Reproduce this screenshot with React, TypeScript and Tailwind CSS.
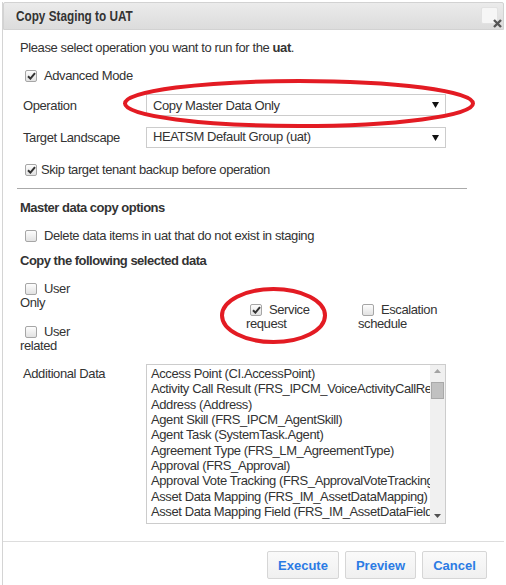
import React from "react";

function Check({ checked }: { checked?: boolean }) {
  return (
    <span className="inline-flex h-[12px] w-[12px] shrink-0 items-center justify-center rounded-[2px] border border-[#a6a6a6] bg-gradient-to-b from-[#fdfdfd] to-[#e2e2e2]">
      {checked && (
        <svg width="9" height="8" viewBox="0 0 9 8">
          <path d="M1 4.2 L3.4 6.6 L8 1.2" fill="none" stroke="#333" strokeWidth="2" />
        </svg>
      )}
    </span>
  );
}

function Arrow() {
  return (
    <svg width="7" height="6" viewBox="0 0 7 6">
      <path d="M0 0 H7 L3.5 6 Z" fill="#111" />
    </svg>
  );
}

function Wrapped({ first, second, checked, pad }: { first: string; second: string; checked?: boolean; pad: string }) {
  return (
    <div className="leading-[14px]">
      <div className={"flex h-[14px] items-center " + pad}>
        <Check checked={checked} />
        <span className="ml-[7px]">{first}</span>
      </div>
      <div className="h-[14px]">{second}</div>
    </div>
  );
}

const items = [
  "Access Point (CI.AccessPoint)",
  "Activity Call Result (FRS_IPCM_VoiceActivityCallResult)",
  "Address (Address)",
  "Agent Skill (FRS_IPCM_AgentSkill)",
  "Agent Task (SystemTask.Agent)",
  "Agreement Type (FRS_LM_AgreementType)",
  "Approval (FRS_Approval)",
  "Approval Vote Tracking (FRS_ApprovalVoteTracking)",
  "Asset Data Mapping (FRS_IM_AssetDataMapping)",
  "Asset Data Mapping Field (FRS_IM_AssetDataField)",
];

export default function App() {
  return (
    <div className="relative h-[585px] w-[506px] overflow-hidden bg-white font-['Liberation_Sans',Arial,sans-serif] text-[13px] leading-[15px] tracking-[-0.4px] text-[#333]">
      <div className="ml-[2px] h-full border-l border-[#d4d4d4]">
        {/* Title bar */}
        <div className="mr-[2px] mt-[2px] flex h-[28px] items-center rounded-t-[2px] border border-[#d2d2d2] bg-gradient-to-b from-[#ebebeb] to-[#dcdcdc] pl-[12px]">
          <span className="origin-left scale-x-[0.84] whitespace-nowrap text-[14px] font-bold tracking-normal text-[#333]">Copy Staging to UAT</span>
          <div className="ml-auto mr-[5px] mt-[4px] h-[17px] w-[17px] self-start rounded-[2px] border border-[#e2e2e2] bg-[#f6f6f6]" />
        </div>

        {/* Body */}
        <div className="pl-[17px]">
          <div className="mt-[10px]">
            Please select operation you want to run for the <b>uat</b>.
          </div>

          <div className="mt-[13px] flex items-center pl-[5px]">
            <Check checked />
            <span className="ml-[7px]">Advanced Mode</span>
          </div>

          <div className="mt-[11px] flex items-center">
            <span className="w-[126px] pl-[3px]">Operation</span>
            <div className="flex h-[22px] w-[300px] items-center border border-[#cccccc] bg-white pl-[6px] pr-[6px]">
              <span>Copy Master Data Only</span>
              <span className="ml-auto flex"><Arrow /></span>
            </div>
          </div>

          <div className="mt-[11px] flex items-center">
            <span className="w-[126px] pl-[3px]">Target Landscape</span>
            <div className="flex h-[21px] w-[300px] items-center border border-[#cccccc] bg-white pl-[6px] pr-[6px]">
              <span className="-mt-[2px]">HEATSM Default Group (uat)</span>
              <span className="ml-auto flex"><Arrow /></span>
            </div>
          </div>

          <div className="mt-[14px] flex items-center pl-[5px]">
            <Check checked />
            <span className="ml-[4px]">Skip target tenant backup before operation</span>
          </div>

          <div className="ml-[-3px] mt-[11px] h-[1px] w-[450px] bg-[#aaaaaa]" />

          <div className="mt-[11px] font-bold tracking-[-0.5px]">Master data copy options</div>

          <div className="mt-[13px] flex items-center pl-[5px]">
            <Check />
            <span className="ml-[7px]">Delete data items in uat that do not exist in staging</span>
          </div>

          <div className="mt-[10px] font-bold tracking-[-0.5px]">Copy the following selected data</div>

          <div className="mt-[14px] flex">
            <div className="w-[226px]">
              <Wrapped first="User" second="Only" pad="pl-[5px]" />
              <div className="mt-[15px]">
                <Wrapped first="User" second="related" pad="pl-[5px]" />
              </div>
            </div>
            <div className="mt-[21px] w-[112px]">
              <Wrapped first="Service" second="request" checked pad="pl-[4px]" />
            </div>
            <div className="mt-[21px]">
              <Wrapped first="Escalation" second="schedule" pad="pl-[4px]" />
            </div>
          </div>

          <div className="mt-[11px] flex">
            <span className="w-[126px] pl-[3px] pt-[2px]">Additional Data</span>
            <div className="flex h-[160px] w-[300px] border border-[#cccccc] bg-white">
              <div className="flex-1 overflow-hidden whitespace-nowrap pl-[4px] pt-[1px] leading-[15.33px]">
                {items.map((t) => (
                  <div key={t}>{t}</div>
                ))}
              </div>
              <div className="flex w-[15px] flex-col items-center bg-[#f0f0f0]">
                <svg className="mt-[4px]" width="7" height="4" viewBox="0 0 7 4">
                  <path d="M0 4 L3.5 0 L7 4 Z" fill="#a3a3a3" />
                </svg>
                <div className="mt-[9px] h-[17px] w-[13px] border border-[#a9a9a9] bg-[#c1c1c1]" />
                <svg className="mb-[5px] mt-auto" width="7" height="4" viewBox="0 0 7 4">
                  <path d="M0 0 L7 0 L3.5 4 Z" fill="#505050" />
                </svg>
              </div>
            </div>
          </div>
        </div>

        <div className="mr-[2px] mt-[17px] h-[1px] bg-[#dddddd]" />

        <div className="mr-[19px] mt-[9px] flex justify-end gap-[6px] tracking-normal">
          <button className="h-[28px] w-[72px] rounded-[2px] border border-[#d6d6d6] bg-gradient-to-b from-[#fafafa] to-[#f0f0f0] font-bold text-[#2b7be4]">Execute</button>
          <button className="h-[28px] w-[71px] rounded-[2px] border border-[#d6d6d6] bg-gradient-to-b from-[#fafafa] to-[#f0f0f0] font-bold text-[#2b7be4]">Preview</button>
          <button className="h-[28px] w-[65px] rounded-[2px] border border-[#d6d6d6] bg-gradient-to-b from-[#fafafa] to-[#f0f0f0] font-bold text-[#2b7be4]">Cancel</button>
        </div>
      </div>

      {/* Close X */}
      <svg className="absolute left-[493px] top-[19px]" width="9" height="9" viewBox="0 0 9 9">
        <path d="M1 1 L8 8 M8 1 L1 8" stroke="#555" strokeWidth="2.4" />
      </svg>

      {/* Red annotation ellipses */}
      <svg className="pointer-events-none absolute left-0 top-0" width="506" height="585" viewBox="0 0 506 585">
        <ellipse cx="299" cy="103.5" rx="174" ry="22.5" fill="none" stroke="#e31b23" strokeWidth="4" />
        <ellipse cx="273.5" cy="315.5" rx="51.5" ry="26.5" fill="none" stroke="#e31b23" strokeWidth="4" />
      </svg>
    </div>
  );
}
